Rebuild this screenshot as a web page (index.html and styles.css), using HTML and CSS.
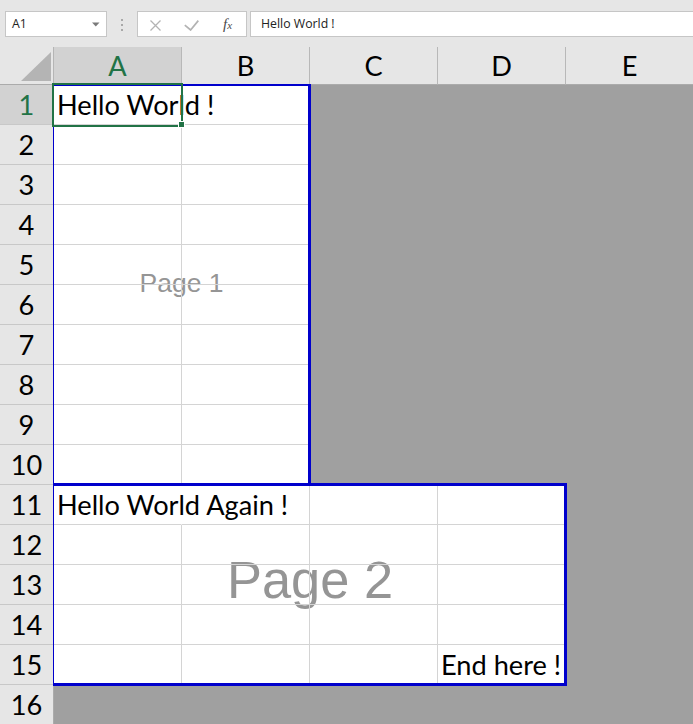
FILE: index.html
```html
<!DOCTYPE html>
<html>
<head>
<meta charset="utf-8">
<link rel="stylesheet" href="styles.css">
</head>
<body>
<div class="toolbar">
  <div class="namebox"><span class="ref">A1</span><svg class="caret" width="8" height="5" viewBox="0 0 8 5"><path d="M0 0.5h7.5l-3.75 4z" fill="#7a7a7a"/></svg></div>
  <div class="grip"><i></i><i></i><i></i></div>
  <div class="fbtns">
    <svg class="ico-x" width="11" height="11" viewBox="0 0 11 11"><path d="M0.5 0.5L10.5 10.5M10.5 0.5L0.5 10.5" stroke="#b3b3b3" stroke-width="1.3" fill="none"/></svg>
    <svg class="ico-ok" width="15" height="11" viewBox="0 0 15 11"><path d="M0.8 5.2L6.6 10L14.3 0.6" stroke="#b3b3b3" stroke-width="1.7" fill="none"/></svg>
    <span class="fx">f<span class="fx-x">x</span></span>
  </div>
  <div class="finput">Hello World !</div>
</div>

<div class="sheet">
  <div class="corner"><svg width="30" height="29" viewBox="0 0 30 29"><path d="M30 0V29H0z" fill="#b4b4b4"/></svg></div>
  <div class="ch sel">A</div><div class="ch">B</div><div class="ch">C</div><div class="ch">D</div><div class="ch">E</div>

  <div class="rh sel">1</div><div class="c ov">Hello World !</div><div class="c"></div><div class="c g"></div><div class="c g"></div><div class="c g"></div>
  <div class="rh">2</div><div class="c"></div><div class="c"></div><div class="c g"></div><div class="c g"></div><div class="c g"></div>
  <div class="rh">3</div><div class="c"></div><div class="c"></div><div class="c g"></div><div class="c g"></div><div class="c g"></div>
  <div class="rh">4</div><div class="c"></div><div class="c"></div><div class="c g"></div><div class="c g"></div><div class="c g"></div>
  <div class="rh">5</div><div class="c"></div><div class="c"></div><div class="c g"></div><div class="c g"></div><div class="c g"></div>
  <div class="rh">6</div><div class="c"></div><div class="c"></div><div class="c g"></div><div class="c g"></div><div class="c g"></div>
  <div class="rh">7</div><div class="c"></div><div class="c"></div><div class="c g"></div><div class="c g"></div><div class="c g"></div>
  <div class="rh">8</div><div class="c"></div><div class="c"></div><div class="c g"></div><div class="c g"></div><div class="c g"></div>
  <div class="rh">9</div><div class="c"></div><div class="c"></div><div class="c g"></div><div class="c g"></div><div class="c g"></div>
  <div class="rh">10</div><div class="c"></div><div class="c"></div><div class="c g"></div><div class="c g"></div><div class="c g"></div>
  <div class="rh">11</div><div class="c ov">Hello World Again !</div><div class="c"></div><div class="c"></div><div class="c"></div><div class="c g"></div>
  <div class="rh">12</div><div class="c"></div><div class="c"></div><div class="c"></div><div class="c"></div><div class="c g"></div>
  <div class="rh">13</div><div class="c"></div><div class="c"></div><div class="c"></div><div class="c"></div><div class="c g"></div>
  <div class="rh">14</div><div class="c"></div><div class="c"></div><div class="c"></div><div class="c"></div><div class="c g"></div>
  <div class="rh">15</div><div class="c"></div><div class="c"></div><div class="c"></div><div class="c">End here !</div><div class="c g"></div>
  <div class="rh">16</div><div class="c g"></div><div class="c g"></div><div class="c g"></div><div class="c g"></div><div class="c g"></div>

  <div class="wm wm1">Page 1</div>
  <div class="wm wm2">Page 2</div>
  <div class="frame f1"></div>
  <div class="frame f2"></div>
  <div class="selbox"></div>
  <div class="handle"></div>
</div>
</body>
</html>
```

FILE: styles.css
```css
html, body {
  margin: 0;
  padding: 0;
}
body {
  width: 693px;
  height: 724px;
  overflow: hidden;
  background: #a0a0a0;
  font-family: Lato, "Noto Sans", sans-serif;
}

/* ---------- formula toolbar ---------- */
.toolbar {
  height: 47px;
  box-sizing: border-box;
  background: #e6e6e6;
  display: flex;
  align-items: flex-start;
  padding: 11px 0 0 5px;
  font-family: "Open Sans", "Noto Sans", sans-serif;
  font-size: 12.3px;
  color: #222;
}
.namebox {
  width: 102px;
  height: 26px;
  box-sizing: border-box;
  background: #fff;
  border: 1px solid #c6c6c6;
  display: flex;
  align-items: center;
  justify-content: space-between;
  padding: 0 6px 0 6px;
  line-height: 24px;
}
.caret {
  display: block;
}
.grip {
  width: 2px;
  margin: 8px 0 0 14px;
  display: flex;
  flex-direction: column;
  gap: 3px;
}
.grip i {
  display: block;
  width: 2px;
  height: 2px;
  background: #a8a8a8;
}
.fbtns {
  margin-left: 14px;
  width: 110px;
  height: 26px;
  box-sizing: border-box;
  background: #fff;
  border: 1px solid #c6c6c6;
  display: flex;
  align-items: center;
  padding-left: 12px;
}
.ico-x { display: block; margin-top: 2px; }
.ico-ok { display: block; margin-left: 23px; margin-top: 2px; }
.fx {
  margin-left: 24px;
  font-family: "Liberation Serif", "DejaVu Serif", serif;
  font-style: italic;
  font-size: 15px;
  color: #4a4a4a;
  line-height: 20px;
}
.fx-x {
  font-size: 11px;
}
.finput {
  flex: 1;
  margin-left: 3px;
  margin-right: -4px;
  height: 26px;
  box-sizing: border-box;
  background: #fff;
  border: 1px solid #c6c6c6;
  padding-left: 10px;
  line-height: 24px;
}

/* ---------- sheet ---------- */
.sheet {
  position: relative;
  display: grid;
  grid-template-columns: 54px repeat(5, 128px);
  grid-template-rows: 38px repeat(16, 40px);
  width: max-content;
  background: #fff;
  font-size: 27.2px;
  color: #000;
}
.corner {
  background: #e6e6e6;
  border-right: 1px solid #b5b5b5;
  border-bottom: 1px solid #ababab;
  display: flex;
  justify-content: flex-end;
  align-items: flex-end;
  padding: 0 2px 3px 0;
}
.corner svg { display: block; }
.ch {
  background: #e6e6e6;
  border-right: 1px solid #b8b8b8;
  border-bottom: 1px solid #ababab;
  text-align: center;
  line-height: 37px;
}
.ch.sel, .rh.sel {
  background: #d2d2d2;
  color: #217346;
}
.rh {
  background: #e6e6e6;
  border-right: 1px solid #ababab;
  border-bottom: 1px solid #c8c8c8;
  text-align: center;
  line-height: 39px;
}
.c {
  position: relative;
  z-index: 1;
  border-right: 1px solid #d4d4d4;
  border-bottom: 1px solid #d4d4d4;
  padding-left: 3px;
  line-height: 39px;
  white-space: nowrap;
}
.c.ov {
  border-right-color: transparent;
}
.c.g {
  background: #a0a0a0;
  border-color: #a0a0a0;
}

/* page watermark labels (under gridlines) */
.wm {
  position: absolute;
  z-index: 0;
  display: flex;
  align-items: center;
  justify-content: center;
  box-sizing: border-box;
  font-family: "Liberation Sans", Arial, sans-serif;
  color: #959595;
  white-space: nowrap;
}
.wm1 {
  left: 54px;
  top: 38px;
  width: 255px;
  height: 399px;
  padding-bottom: 3px;
  font-size: 26.5px;
}
.wm2 {
  left: 54px;
  top: 439px;
  width: 512px;
  height: 197px;
  padding-bottom: 9px;
  font-size: 52.4px;
}

/* page break frames */
.frame {
  position: absolute;
  z-index: 2;
  box-sizing: border-box;
  border: 3px solid #0000cc;
  border-left-width: 1px;
}
.f1 {
  left: 53px;
  top: 37px;
  width: 258px;
  height: 402px;
  border-top-width: 2px;
}
.f2 {
  left: 53px;
  top: 436px;
  width: 514px;
  height: 203px;
}

/* active cell selection */
.selbox {
  position: absolute;
  z-index: 3;
  left: 52px;
  top: 36px;
  width: 131px;
  height: 44px;
  box-sizing: border-box;
  border: 2px solid #217346;
}
.handle {
  position: absolute;
  z-index: 4;
  left: 178px;
  top: 74px;
  width: 7px;
  height: 7px;
  box-sizing: border-box;
  background: #217346;
  border: 1px solid #fff;
}
```
